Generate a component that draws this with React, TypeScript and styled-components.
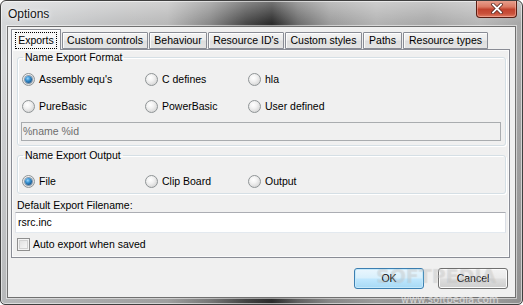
import React from "react";
import styled, { createGlobalStyle } from "styled-components";

const Global = createGlobalStyle`
  html, body { margin: 0; padding: 0; background: #ffffff; }
  body { font-family: "Liberation Sans", Arial, sans-serif; font-size: 10.5px; color: #000; }
  * { box-sizing: border-box; }
`;

const Window = styled.div`
  position: relative;
  width: 523px;
  height: 305px;
  border: 1px solid #3f3f3f;
  border-radius: 6px 6px 5px 5px;
  padding: 0 6px 6px 6px;
  display: flex;
  flex-direction: column;
  overflow: hidden;
  background:
    linear-gradient(180deg, rgba(255,255,255,0.35) 0px, rgba(255,255,255,0) 22px, rgba(0,0,0,0) 60px, rgba(40,40,40,0.18) 100%),
    linear-gradient(90deg, #d6d8da 0%, #c4c5c6 18%, #b9b9b9 32%, #8a8a8a 40%, #4a4a4a 47%, #2c2c2c 52%, #6e6e6e 57%, #9c9c9c 63%, #b4b4b4 72%, #a9a9a9 82%, #b8b8b8 92%, #a6a6a6 100%);
  box-shadow: inset 0 0 0 1px rgba(255,255,255,0.55);
`;

const TitleBar = styled.div`
  height: 25px;
  display: flex;
  align-items: flex-start;
  justify-content: space-between;
  flex-shrink: 0;
`;

const Title = styled.div`
  font-family: "Liberation Sans", Arial, sans-serif;
  font-size: 12px;
  line-height: 14px;
  color: #141414;
  padding: 6px 0 0 1px;
  text-shadow: 0 0 6px rgba(255,255,255,0.95), 0 0 3px rgba(255,255,255,0.9);
`;

const CloseButton = styled.div`
  width: 41px;
  height: 18px;
  margin-top: -1px;
  margin-right: -1px;
  border: 1px solid #5a1d12;
  border-top: none;
  border-radius: 0 0 4px 4px;
  background: linear-gradient(180deg, #e9a493 0%, #dc7a64 40%, #c2432e 55%, #c9513b 80%, #e07d62 100%);
  box-shadow: inset 0 0 0 1px rgba(255,200,190,0.45);
  display: flex;
  align-items: center;
  justify-content: center;
`;

const Client = styled.div`
  flex: 1;
  border: 1px solid #707070;
  background: #f0f0f0;
  display: flex;
  flex-direction: column;
  padding-top: 2px;
  box-shadow: 0 0 0 1px rgba(255,255,255,0.5);
`;

const TabRow = styled.div`
  height: 20px;
  display: flex;
  align-items: flex-end;
  gap: 1px;
  padding-left: 3px;
  position: relative;
  z-index: 2;
`;

const Tab = styled.div<{ $w: number; $active?: boolean }>`
  width: ${(p) => p.$w}px;
  height: ${(p) => (p.$active ? 21 : 17)}px;
  margin-bottom: ${(p) => (p.$active ? -1 : 0)}px;
  border: 1px solid #898c95;
  border-bottom: ${(p) => (p.$active ? "none" : "1px solid #898c95")};
  border-radius: 1px 1px 0 0;
  background: ${(p) =>
    p.$active
      ? "#f7f7f7"
      : "linear-gradient(180deg, #f3f3f3 0%, #ebebeb 45%, #dedede 55%, #e4e4e4 100%)"};
  box-shadow: inset 1px 1px 0 rgba(255,255,255,0.8);
  display: flex;
  align-items: ${(p) => (p.$active ? "flex-start" : "center")};
  justify-content: center;
  padding-top: ${(p) => (p.$active ? 3 : 0)}px;
  white-space: nowrap;
  font-size: 10.5px;
  line-height: 13px;
`;

const Focus = styled.span`
  outline: 1px dotted #000;
  outline-offset: 0px;
  padding: 1px 2px;
`;

const Panel = styled.div`
  height: 209px;
  margin: 0 5px 0 3px;
  border: 1px solid #898c95;
  background: #f0f0f0;
  box-shadow: inset 0 0 0 1px #fbfbfb;
  display: flex;
  flex-direction: column;
  padding-top: 1px;
`;

const Group = styled.fieldset<{ $top: number; $bottom: number }>`
  margin: ${(p) => p.$top}px 3px 0 5px;
  padding: 0 0 ${(p) => p.$bottom}px 0;
  border: 1px solid #d5dfe5;
  border-radius: 3px;
  box-shadow: inset 1px 1px 0 #ffffff, 1px 1px 0 #ffffff;
  min-width: 0;
`;

const Legend = styled.legend`
  margin-left: 5px;
  padding: 0 2px;
  font-size: 10.5px;
  line-height: 13px;
`;

const RadioGrid = styled.div<{ $top: number }>`
  display: grid;
  grid-template-columns: 123px 103px 1fr;
  padding-left: 4px;
  margin-top: ${(p) => p.$top}px;
  height: 16px;
  align-items: center;
`;

const Option = styled.label`
  display: flex;
  align-items: center;
  gap: 4px;
  font-size: 10.5px;
  line-height: 13px;
  white-space: nowrap;
`;

const RadioDot = styled.span<{ $on?: boolean }>`
  width: 13px;
  height: 13px;
  border-radius: 50%;
  border: 1px solid #8f9496;
  background: radial-gradient(circle at 40% 35%, #ffffff 0%, #f2f2f2 35%, #d6d6d6 80%, #c9c9c9 100%);
  display: flex;
  align-items: center;
  justify-content: center;
  flex-shrink: 0;
  &::after {
    content: "";
    display: ${(p) => (p.$on ? "block" : "none")};
    width: 7px;
    height: 7px;
    border-radius: 50%;
    background: radial-gradient(circle at 40% 35%, #9ad7ff 0%, #3c95d3 35%, #15578f 75%, #0f3f6a 100%);
    box-shadow: 0 0 0 1px rgba(30,70,110,0.5);
  }
`;

const DisabledField = styled.div`
  height: 19px;
  margin: 8px 4px 0 3px;
  border: 1px solid #a9acaf;
  background: #f0f0f0;
  color: #6d6d6d;
  font-size: 10.5px;
  line-height: 17px;
  padding-left: 1px;
`;

const FieldLabel = styled.div`
  margin: 5px 0 0 5px;
  font-size: 10.5px;
  line-height: 13px;
  height: 13px;
`;

const TextField = styled.div`
  height: 21px;
  margin: 0 3px 0 3px;
  border: 1px solid #abadb3;
  border-color: #abadb3 #dbdfe6 #e3e9ef #e2e3ea;
  background: #ffffff;
  font-size: 10.5px;
  line-height: 19px;
  padding-left: 2px;
`;

const CheckRow = styled.label`
  display: flex;
  align-items: center;
  gap: 3px;
  margin: 5px 0 0 5px;
  height: 13px;
  font-size: 10.5px;
  line-height: 13px;
`;

const CheckBox = styled.span`
  width: 13px;
  height: 13px;
  border: 1px solid #8f8f8f;
  background: linear-gradient(135deg, #dcdcdc 0%, #f0f0f0 60%, #fafafa 100%);
  box-shadow: inset 0 0 0 1px #f4f4f4, inset 0 0 0 2px #d2d2d2;
  flex-shrink: 0;
`;

const ButtonRow = styled.div`
  display: flex;
  justify-content: flex-end;
  gap: 14px;
  margin: 10px 7px 0 0;
`;

const Button = styled.div<{ $default?: boolean }>`
  width: 70px;
  height: 21px;
  border-radius: 3px;
  border: 1px solid ${(p) => (p.$default ? "#3c7fb1" : "#707070")};
  background: ${(p) =>
    p.$default
      ? "linear-gradient(180deg, #eaf6fd 0%, #d9f0fc 45%, #bee6fd 55%, #a7d9f5 100%)"
      : "linear-gradient(180deg, #f2f2f2 0%, #ebebeb 45%, #dddddd 55%, #cfcfcf 100%)"};
  box-shadow: inset 0 0 0 1px ${(p) => (p.$default ? "#c6e9fb" : "#fcfcfc")};
  display: flex;
  align-items: center;
  justify-content: center;
  font-size: 10.5px;
  line-height: 13px;
`;

const WatermarkBig = styled.div`
  position: absolute;
  left: 375px;
  top: 265px;
  font-family: "DejaVu Sans", sans-serif;
  font-weight: bold;
  font-size: 19px;
  line-height: 20px;
  letter-spacing: 0px;
  color: rgba(255,255,255,0.3);
  text-shadow: 0 0 1px rgba(0,0,0,0.15);
  pointer-events: none;
`;

const WatermarkSmall = styled.div`
  position: absolute;
  left: 400px;
  top: 294px;
  font-family: "DejaVu Sans", sans-serif;
  font-size: 10px;
  line-height: 10px;
  color: rgba(235,235,235,0.75);
  pointer-events: none;
`;

const tabs: { label: string; w: number }[] = [
  { label: "Exports", w: 50 },
  { label: "Custom controls", w: 86 },
  { label: "Behaviour", w: 58 },
  { label: "Resource ID's", w: 76 },
  { label: "Custom styles", w: 77 },
  { label: "Paths", w: 39 },
  { label: "Resource types", w: 85 },
];

function Radio({ label, on }: { label: string; on?: boolean }) {
  return (
    <Option>
      <RadioDot $on={on} />
      <span>{label}</span>
    </Option>
  );
}

export default function App() {
  return (
    <>
      <Global />
      <Window>
        <TitleBar>
          <Title>Options</Title>
          <CloseButton>
            <svg width="12" height="11" viewBox="0 0 12 11">
              <path d="M2 1.5 L10 9.5 M10 1.5 L2 9.5" stroke="#5a2a22" strokeWidth="3.4" strokeLinecap="square" />
              <path d="M2 1.5 L10 9.5 M10 1.5 L2 9.5" stroke="#ffffff" strokeWidth="1.8" strokeLinecap="square" />
            </svg>
          </CloseButton>
        </TitleBar>
        <Client>
          <TabRow>
            {tabs.map((t, i) => (
              <Tab key={t.label} $w={t.w} $active={i === 0}>
                {i === 0 ? <Focus>{t.label}</Focus> : t.label}
              </Tab>
            ))}
          </TabRow>
          <Panel>
            <Group $top={0} $bottom={4}>
              <Legend>Name Export Format</Legend>
              <RadioGrid $top={7}>
                <Radio label="Assembly equ's" on />
                <Radio label="C defines" />
                <Radio label="hla" />
              </RadioGrid>
              <RadioGrid $top={11}>
                <Radio label="PureBasic" />
                <Radio label="PowerBasic" />
                <Radio label="User defined" />
              </RadioGrid>
              <DisabledField>%name %id</DisabledField>
            </Group>
            <Group $top={3} $bottom={4}>
              <Legend>Name Export Output</Legend>
              <RadioGrid $top={11}>
                <Radio label="File" on />
                <Radio label="Clip Board" />
                <Radio label="Output" />
              </RadioGrid>
            </Group>
            <FieldLabel>Default Export Filename:</FieldLabel>
            <TextField>rsrc.inc</TextField>
            <CheckRow>
              <CheckBox />
              <span>Auto export when saved</span>
            </CheckRow>
          </Panel>
          <ButtonRow>
            <Button $default>OK</Button>
            <Button>Cancel</Button>
          </ButtonRow>
        </Client>
        <WatermarkBig>SOFTPEDIA</WatermarkBig>
        <WatermarkSmall>www.softpedia.com</WatermarkSmall>
      </Window>
    </>
  );
}
